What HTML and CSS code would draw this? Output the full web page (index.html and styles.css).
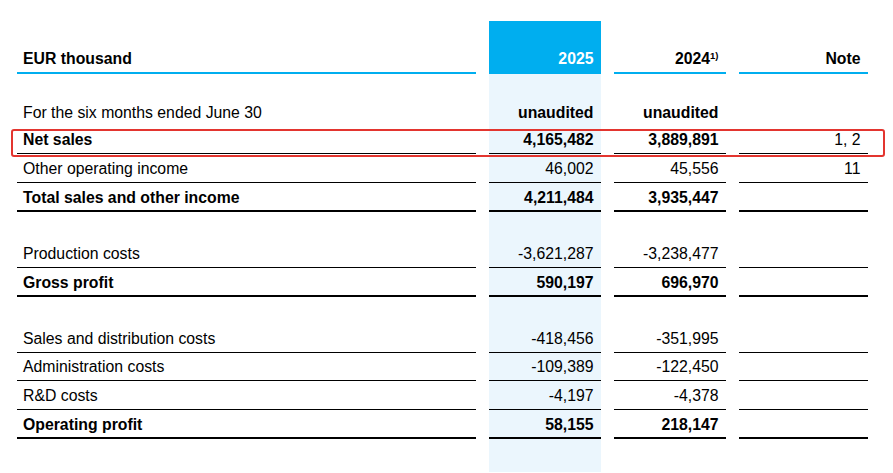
FILE: index.html
```html
<!DOCTYPE html>
<html lang="en">
<head>
<meta charset="utf-8">
<title>Income statement</title>
<link rel="stylesheet" href="styles.css">
</head>
<body>
<div class="page">
  <div class="row head">
    <div class="cell">EUR thousand</div>
    <div class="cell num cur">2025</div>
    <div class="cell num"><span>2024<sup>1)</sup></span></div>
    <div class="cell num">Note</div>
  </div>
  <div class="row spacer"><div></div><div class="cur"></div><div></div><div></div></div>
  <div class="row">
    <div class="cell">For the six months ended June 30</div>
    <div class="cell num cur bold">unaudited</div>
    <div class="cell num bold">unaudited</div>
    <div class="cell num"></div>
  </div>
  <div class="row rule bold">
    <div class="cell">Net sales</div>
    <div class="cell num cur">4,165,482</div>
    <div class="cell num">3,889,891</div>
    <div class="cell num normal">1, 2</div>
  </div>
  <div class="row rule">
    <div class="cell">Other operating income</div>
    <div class="cell num cur">46,002</div>
    <div class="cell num">45,556</div>
    <div class="cell num">11</div>
  </div>
  <div class="row rule thick bold">
    <div class="cell">Total sales and other income</div>
    <div class="cell num cur">4,211,484</div>
    <div class="cell num">3,935,447</div>
    <div class="cell num"></div>
  </div>
  <div class="row blank"><div></div><div class="cur"></div><div></div><div></div></div>
  <div class="row rule">
    <div class="cell">Production costs</div>
    <div class="cell num cur">-3,621,287</div>
    <div class="cell num">-3,238,477</div>
    <div class="cell num"></div>
  </div>
  <div class="row rule thick bold">
    <div class="cell">Gross profit</div>
    <div class="cell num cur">590,197</div>
    <div class="cell num">696,970</div>
    <div class="cell num"></div>
  </div>
  <div class="row blank"><div></div><div class="cur"></div><div></div><div></div></div>
  <div class="row rule">
    <div class="cell">Sales and distribution costs</div>
    <div class="cell num cur">-418,456</div>
    <div class="cell num">-351,995</div>
    <div class="cell num"></div>
  </div>
  <div class="row rule">
    <div class="cell">Administration costs</div>
    <div class="cell num cur">-109,389</div>
    <div class="cell num">-122,450</div>
    <div class="cell num"></div>
  </div>
  <div class="row rule">
    <div class="cell">R&amp;D costs</div>
    <div class="cell num cur">-4,197</div>
    <div class="cell num">-4,378</div>
    <div class="cell num"></div>
  </div>
  <div class="row rule thick bold">
    <div class="cell">Operating profit</div>
    <div class="cell num cur">58,155</div>
    <div class="cell num">218,147</div>
    <div class="cell num"></div>
  </div>
  <div class="row fill"><div></div><div class="cur"></div><div></div><div></div></div>
  <div class="highlight"></div>
</div>
</body>
</html>
```
FILE: styles.css
```css
* {
  box-sizing: border-box;
}

html,
body {
  margin: 0;
  background: #ffffff;
}

body {
  width: 893px;
  height: 473px;
  overflow: hidden;
  font-family: "Liberation Sans", Arial, sans-serif;
  font-size: 15.8px;
  color: #000000;
}

.page {
  position: relative;
  height: 473px;
  padding: 21px 0 0 17px;
}

.row {
  display: grid;
  grid-template-columns: 459px 112px 112px 129px;
  column-gap: 13px;
  height: 28.5px;
}

.cell {
  display: flex;
  flex-direction: column;
  justify-content: flex-end;
  padding: 0 7.5px 5px 6px;
  line-height: 17px;
  white-space: nowrap;
}

.num {
  text-align: right;
}

.cur {
  background: #ebf6fd;
}

.bold {
  font-weight: bold;
}

.normal {
  font-weight: normal;
}

.head {
  height: 53px;
}

.head .cell {
  font-weight: bold;
  border-bottom: 2px solid #00aeef;
}

.head .cur {
  background: #00aeef;
  color: #ffffff;
}

.head sup {
  font-size: 9.5px;
  line-height: 0;
  vertical-align: 5.5px;
}

.spacer {
  height: 23px;
}

.blank {
  height: 27px;
}

.rule .cell {
  border-bottom: 1px solid #000000;
}

.rule.thick {
  height: 29.5px;
}

.rule.thick .cell {
  border-bottom-width: 2px;
  padding-bottom: 4px;
}

.fill {
  height: 33px;
}

.highlight {
  position: absolute;
  left: 11px;
  top: 129px;
  width: 874px;
  height: 28px;
  border: 2px solid #e3352f;
  border-radius: 3px;
}
```
